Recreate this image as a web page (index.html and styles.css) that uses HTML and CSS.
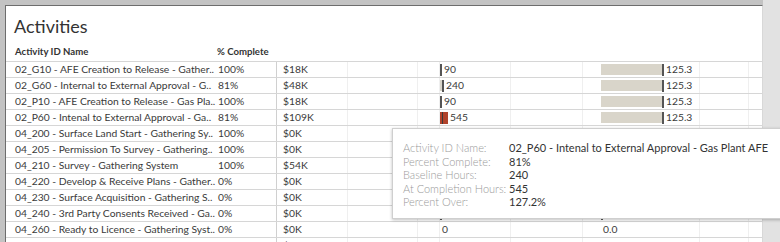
FILE: index.html
```html
<!DOCTYPE html>
<html>
<head>
<meta charset="utf-8">
<link rel="stylesheet" href="styles.css">
</head>
<body>
<div class="app">
  <div class="frame">
    <div class="panel">
      <div class="title">Activities</div>
      <div class="head">
        <span class="h-name">Activity ID Name</span>
        <span class="h-pct">% Complete</span>
      </div>
      <div class="rows">
        <div class="row"><div class="c name">02_G10 - AFE Creation to Release - Gather..</div><div class="c pct">100%</div><div class="c cost">$18K</div><div class="c g"></div><div class="c g"></div><div class="c ch1"><span class="axis"></span><span class="v">90</span></div><div class="c g"></div><div class="c ch2"><span class="beige"></span><span class="axis"></span><span class="v">125.3</span></div><div class="c g"></div><div class="c g"></div></div>
        <div class="row"><div class="c name">02_G60 - Internal to External Approval - G..</div><div class="c pct">81%</div><div class="c cost">$48K</div><div class="c g"></div><div class="c g"></div><div class="c ch1"><span class="beige" style="width:2px"></span><span class="axis"></span><span class="v">240</span></div><div class="c g"></div><div class="c ch2"><span class="beige"></span><span class="axis"></span><span class="v">125.3</span></div><div class="c g"></div><div class="c g"></div></div>
        <div class="row"><div class="c name">02_P10 - AFE Creation to Release - Gas Pla..</div><div class="c pct">100%</div><div class="c cost">$18K</div><div class="c g"></div><div class="c g"></div><div class="c ch1"><span class="axis"></span><span class="v">90</span></div><div class="c g"></div><div class="c ch2"><span class="beige"></span><span class="axis"></span><span class="v">125.3</span></div><div class="c g"></div><div class="c g"></div></div>
        <div class="row"><div class="c name">02_P60 - Intenal to External Approval - Ga..</div><div class="c pct">81%</div><div class="c cost">$109K</div><div class="c g"></div><div class="c g"></div><div class="c ch1"><span class="red"><span class="ref"></span></span><span class="v">545</span></div><div class="c g"></div><div class="c ch2"><span class="beige"></span><span class="axis"></span><span class="v">125.3</span></div><div class="c g"></div><div class="c g"></div></div>
        <div class="row"><div class="c name">04_200 - Surface Land Start - Gathering Sy..</div><div class="c pct">100%</div><div class="c cost">$0K</div><div class="c g"></div><div class="c g"></div><div class="c ch1"><span class="axis"></span><span class="v">0</span></div><div class="c g"></div><div class="c ch2"><span class="axis"></span><span class="v">0.0</span></div><div class="c g"></div><div class="c g"></div></div>
        <div class="row"><div class="c name">04_205 - Permission To Survey - Gathering..</div><div class="c pct">100%</div><div class="c cost">$0K</div><div class="c g"></div><div class="c g"></div><div class="c ch1"><span class="axis"></span><span class="v">0</span></div><div class="c g"></div><div class="c ch2"><span class="axis"></span><span class="v">0.0</span></div><div class="c g"></div><div class="c g"></div></div>
        <div class="row"><div class="c name">04_210 - Survey - Gathering System</div><div class="c pct">100%</div><div class="c cost">$54K</div><div class="c g"></div><div class="c g"></div><div class="c ch1"><span class="axis"></span><span class="v">0</span></div><div class="c g"></div><div class="c ch2"><span class="axis"></span><span class="v">0.0</span></div><div class="c g"></div><div class="c g"></div></div>
        <div class="row"><div class="c name">04_220 - Develop &amp; Receive Plans - Gather..</div><div class="c pct">0%</div><div class="c cost">$0K</div><div class="c g"></div><div class="c g"></div><div class="c ch1"><span class="axis"></span><span class="v">0</span></div><div class="c g"></div><div class="c ch2"><span class="axis"></span><span class="v">0.0</span></div><div class="c g"></div><div class="c g"></div></div>
        <div class="row"><div class="c name">04_230 - Surface Acquisition - Gathering S..</div><div class="c pct">0%</div><div class="c cost">$0K</div><div class="c g"></div><div class="c g"></div><div class="c ch1"><span class="axis"></span><span class="v">0</span></div><div class="c g"></div><div class="c ch2"><span class="axis"></span><span class="v">0.0</span></div><div class="c g"></div><div class="c g"></div></div>
        <div class="row"><div class="c name">04_240 - 3rd Party Consents Received - Ga..</div><div class="c pct">0%</div><div class="c cost">$0K</div><div class="c g"></div><div class="c g"></div><div class="c ch1"><span class="axis"></span><span class="v">0</span></div><div class="c g"></div><div class="c ch2"><span class="axis"></span><span class="v">0.0</span></div><div class="c g"></div><div class="c g"></div></div>
        <div class="row"><div class="c name">04_260 - Ready to Licence - Gathering Syst..</div><div class="c pct">0%</div><div class="c cost">$0K</div><div class="c g"></div><div class="c g"></div><div class="c ch1"><span class="v">0</span></div><div class="c g"></div><div class="c ch2"><span class="v">0.0</span></div><div class="c g"></div><div class="c g"></div></div>
        <div class="row"><div class="c name">04_300 - Surface Land Survey - Gathering ..</div><div class="c pct">100%</div><div class="c cost">$0K</div><div class="c g"></div><div class="c g"></div><div class="c ch1"><span class="v">0</span></div><div class="c g"></div><div class="c ch2"><span class="v">0.0</span></div><div class="c g"></div><div class="c g"></div></div>
      </div>
    </div>
  </div>
  <div class="strip"></div>
</div>
<div class="tooltip">
  <div class="tt-row"><span class="tt-k">Activity ID Name:</span><span class="tt-v">02_P60 - Intenal to External Approval - Gas Plant AFE</span></div>
  <div class="tt-row"><span class="tt-k">Percent Complete:</span><span class="tt-v">81%</span></div>
  <div class="tt-row"><span class="tt-k">Baseline Hours:</span><span class="tt-v">240</span></div>
  <div class="tt-row"><span class="tt-k">At Completion Hours:</span><span class="tt-v">545</span></div>
  <div class="tt-row"><span class="tt-k">Percent Over:</span><span class="tt-v">127.2%</span></div>
</div>
</body>
</html>
```

FILE: styles.css
```css
* { box-sizing: border-box; }
html, body { margin: 0; padding: 0; }
body {
  width: 780px;
  height: 242px;
  overflow: hidden;
  position: relative;
  font-family: "Lato", "Open Sans", sans-serif;
  font-size: 10.3px;
  color: #3a3a3a;
  background: #e2e2e2;
}
.app {
  display: flex;
  height: 242px;
}
.frame {
  width: 763px;
  background: #c3c3c3;
  padding: 5px 0 0 5px;
  display: flex;
}
.panel {
  flex: 1;
  background: #fff;
  border-top: 1px solid #6d6d6d;
  border-left: 1px solid #6d6d6d;
  border-right: 1px solid #d8d8d8;
  overflow: hidden;
}
.strip {
  flex: 1;
  background: #e2e2e2;
}
.title {
  font-size: 18px;
  color: #333;
  padding: 9px 0 0 8px;
  height: 37px;
  line-height: 22px;
}
.head {
  display: flex;
  height: 18px;
  line-height: 18px;
  font-weight: bold;
  font-size: 9.6px;
  color: #333;
}
.h-name { width: 211px; padding-left: 9px; }
.h-pct { padding-left: 0; }
.row {
  display: grid;
  grid-template-columns: 207px 63px 71px 70px 22px 71px 72px 117px 49px 12px;
  height: 16px;
  border-top: 1px solid #d6d6d6;
}
.c {
  height: 15px;
  line-height: 15px;
  white-space: nowrap;
  display: flex;
  align-items: center;
  overflow: visible;
}
.name { padding-left: 9px; }
.pct { padding-left: 5px; }
.cost { padding-left: 6px; border-left: 1px solid #d0d0d0; }
.g { border-left: 1px solid #efefef; }
.ch1 { border-left: 1px solid #efefef; }
.ch2 { border-left: 1px solid #efefef; padding-left: 18px; }
.axis {
  width: 2px;
  height: 12px;
  background: #555;
  flex: none;
}
.beige {
  width: 61px;
  height: 11px;
  background: #d9d5ca;
  flex: none;
}
.red {
  width: 8px;
  height: 12px;
  background: #b0432c;
  flex: none;
  display: flex;
  padding-left: 2px;
}
.ref { width: 1px; height: 12px; background: #3a3a3a; }
.v { padding-left: 2px; }
.tooltip {
  position: absolute;
  left: 392px;
  top: 128px;
  width: 400px;
  height: 91px;
  background: #fff;
  border: 1px solid #cfcfcf;
  box-shadow: 0 1px 3px rgba(0,0,0,0.25);
  padding: 12px 0 0 10px;
  font-size: 11px;
}
.tt-row {
  display: flex;
  height: 13.5px;
  line-height: 13.5px;
  white-space: nowrap;
}
.tt-k { width: 106px; color: #9a9a9a; font-weight: 300; }
.tt-v { color: #333; }
```
